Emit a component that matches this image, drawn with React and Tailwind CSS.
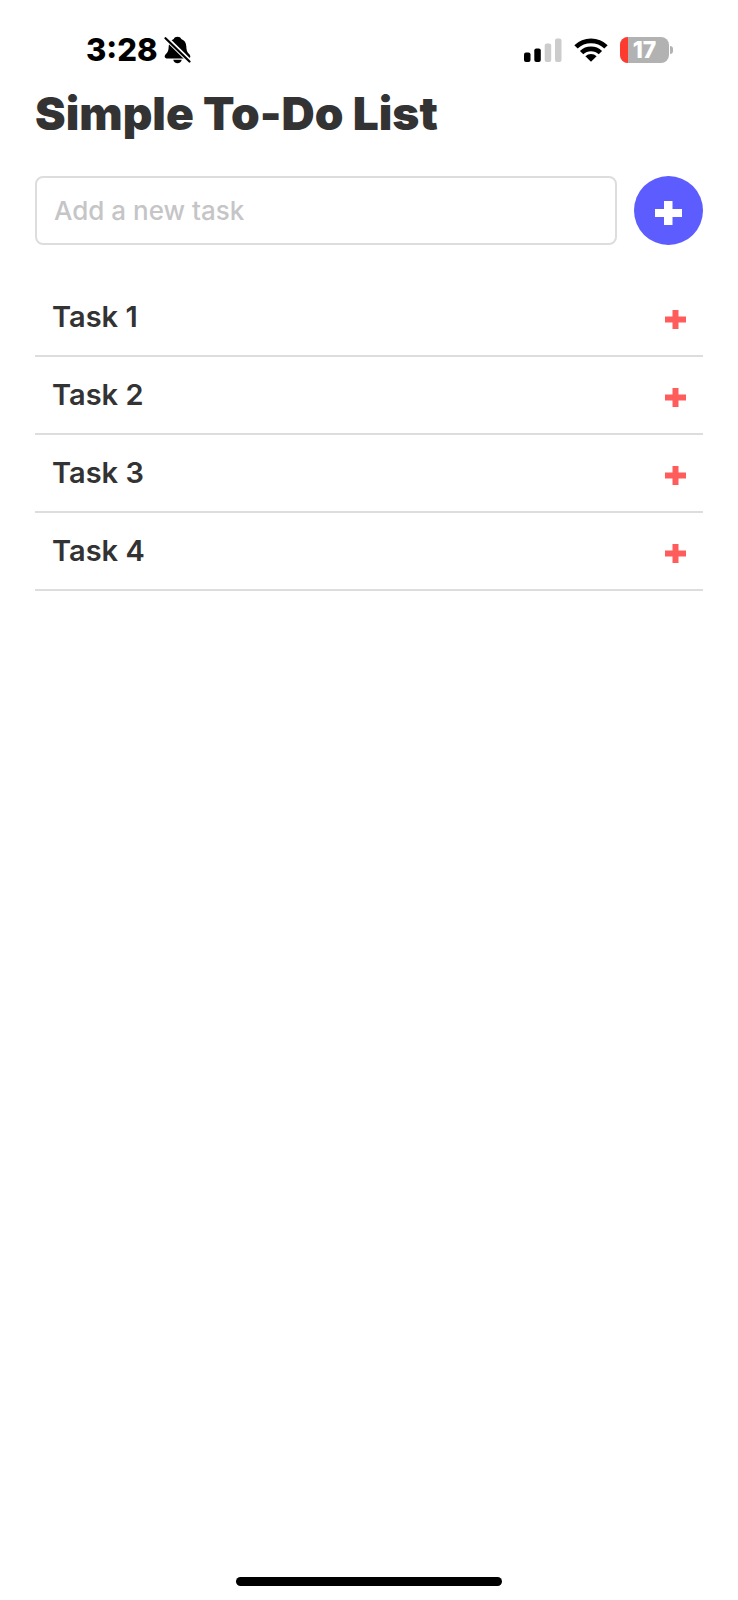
import { useState } from "react";

function BellOffIcon() {
  return (
    <svg width="27" height="28" viewBox="0 0 27 28" aria-hidden="true">
      <path
        d="M13.500 0.800c-1.900 0-3.200.9-3.700 2.200C6.400 4.100 4.800 7 4.700 10.500c-.1 3.600-.7 5.300-2.300 7C1.300 18.700.7 19.600.7 20.500c0 1 .8 1.900 2 1.900h21.600c1.300 0 2-.9 2-1.900 0-.9-.6-1.800-1.700-3-1.600-1.700-2.200-3.400-2.300-7C22.200 7 20.600 4.100 17.200 3c-.5-1.300-1.800-2.200-3.700-2.200z"
        fill="#000"
      />
      <path d="M9.300 23.700h8.400c-.3 2-2 3.500-4.200 3.500s-3.900-1.500-4.200-3.500z" fill="#000" />
      <path d="M1 1L26.500 26" stroke="#fff" strokeWidth="4.800" />
      <path d="M1.500 2.200L25.500 25.500" stroke="#000" strokeWidth="2.200" strokeLinecap="round" />
    </svg>
  );
}

function SignalIcon() {
  return (
    <svg width="38" height="24" viewBox="0 0 38 24" aria-hidden="true">
      <rect x="0" y="14.500" width="6.500" height="9.500" rx="2" fill="#000" />
      <rect x="10.300" y="10.500" width="6.500" height="13.500" rx="2" fill="#000" />
      <rect x="20.700" y="5.500" width="6.500" height="18.500" rx="2" fill="#ccc" />
      <rect x="31" y="0.500" width="6.500" height="23.500" rx="2" fill="#ccc" />
    </svg>
  );
}

function WifiIcon() {
  return (
    <svg width="34" height="24" viewBox="0 0 34 24" aria-hidden="true">
      <g fill="none" stroke="#000" strokeWidth="4.800">
        <path d="M2 8.900A21.500 21.500 0 0 1 32 8.900" />
        <path d="M7.600 14.600A13.500 13.500 0 0 1 26.400 14.600" />
      </g>
      <path d="M17 23.800L11.400 18.300A8 8 0 0 1 22.600 18.300Z" fill="#000" />
    </svg>
  );
}

function Battery({ level }) {
  return (
    <div className="flex items-center gap-px">
      <div className="relative flex h-[26px] w-[49px] items-center justify-center rounded-lg bg-[#b2b2b2]">
        <div
          className="absolute inset-y-0 left-0 rounded-l-lg bg-[#ff3b30]"
          style={{ width: `${level}%` }}
        />
        <span className="relative text-[23px] leading-[26px] font-extrabold text-white">{level}</span>
      </div>
      <div className="h-2 w-[3px] rounded-r-full bg-[#b2b2b2]" />
    </div>
  );
}

function StatusBar() {
  return (
    <div className="flex items-center justify-between pt-9 pr-[65px] pl-[86px]">
      <div className="flex items-center gap-1.5">
        <span className="text-[31px] leading-7 font-extrabold text-black">3:28</span>
        <BellOffIcon />
      </div>
      <div className="flex items-center gap-3">
        <SignalIcon />
        <WifiIcon />
        <Battery level={17} />
      </div>
    </div>
  );
}

function AddGlyph() {
  return (
    <svg width="27" height="24" viewBox="0 0 27 24" fill="currentColor" aria-hidden="true">
      <path d="M9 0h8.500v8h9.500v8h-9.500v8H9v-8H0V8h9z" />
    </svg>
  );
}

function RemoveGlyph() {
  return (
    <svg width="21" height="19" viewBox="0 0 21 19" fill="currentColor" aria-hidden="true">
      <path d="M7.500 0h6v6.500H21v6h-7.500V19h-6v-6.500H0v-6h7.500z" />
    </svg>
  );
}

export default function App() {
  const [tasks, setTasks] = useState(["Task 1", "Task 2", "Task 3", "Task 4"]);
  const [draft, setDraft] = useState("");

  const addTask = (event) => {
    event.preventDefault();
    const name = draft.trim();
    if (!name) return;
    setTasks([...tasks, name]);
    setDraft("");
  };

  return (
    <div className="flex min-h-screen flex-col bg-white font-['Inter',sans-serif] text-[#333]">
      <StatusBar />
      <main className="flex-1 px-[35px]">
        <h1 className="pt-6 text-[46px] leading-[50px] font-black">Simple To-Do List</h1>
        <form onSubmit={addTask} className="mt-[38px] flex items-center gap-[17px]">
          <input
            type="text"
            aria-label="New task"
            placeholder="Add a new task"
            value={draft}
            onChange={(event) => setDraft(event.target.value)}
            className="h-[69px] min-w-0 flex-1 rounded-lg border-2 border-[#ddd] px-[17px] text-[26px] font-medium outline-none placeholder:text-[#c5c5c7]"
          />
          <button
            type="submit"
            aria-label="Add task"
            className="flex size-[69px] shrink-0 items-center justify-center rounded-full bg-[#5c5cff] pt-1 text-white"
          >
            <AddGlyph />
          </button>
        </form>
        <ul className="mt-[34px]">
          {tasks.map((task, index) => (
            <li
              key={index}
              className="flex h-[78px] items-center justify-between border-b-2 border-[#ddd] px-[17px]"
            >
              <span className="text-[29px] leading-[42px] font-semibold">{task}</span>
              <button
                type="button"
                aria-label={`Remove ${task}`}
                onClick={() => setTasks(tasks.filter((_, i) => i !== index))}
                className="pt-1 text-[#ff5c5c]"
              >
                <RemoveGlyph />
              </button>
            </li>
          ))}
        </ul>
      </main>
      <div className="mx-auto mb-3.5 h-[9px] w-[36%] rounded-full bg-black" />
    </div>
  );
}
